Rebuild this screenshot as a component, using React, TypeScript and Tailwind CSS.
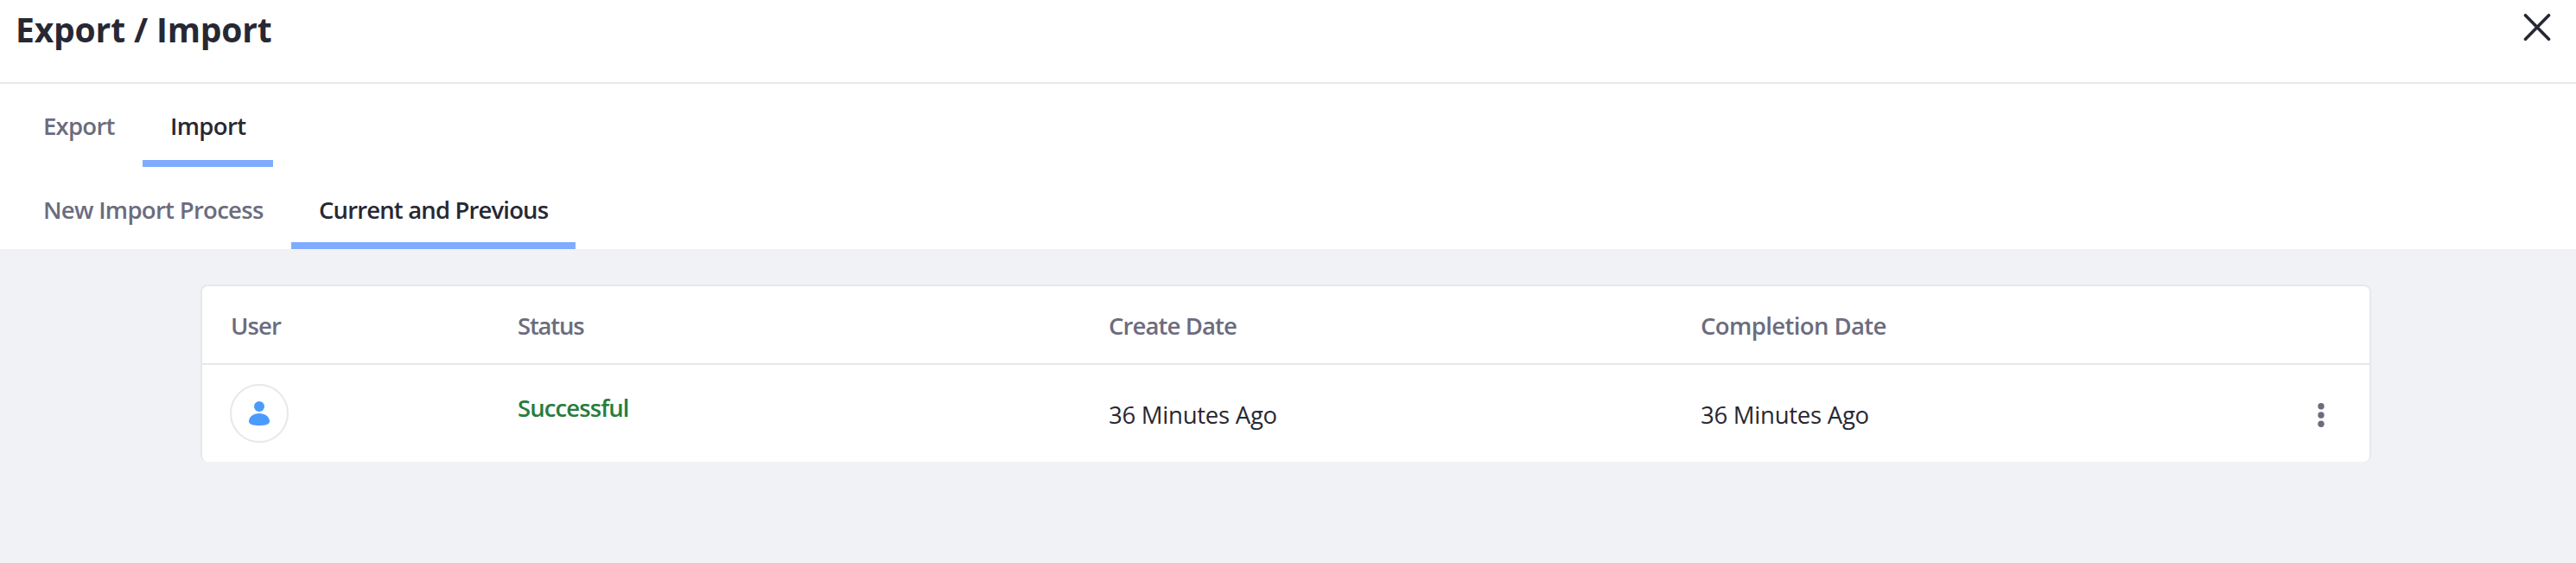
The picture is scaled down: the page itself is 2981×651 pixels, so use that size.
import type { ReactNode } from "react";

function Tab({ active, className, children }: { active?: boolean; className: string; children: ReactNode }) {
  return (
    <button
      className={`h-full shrink-0 border-b-8 text-left ${active ? "border-[#80acff] text-[#272833]" : "border-transparent text-[#6b6c7e]"} ${className}`}
    >
      {children}
    </button>
  );
}

export default function App() {
  return (
    <div className="flex h-[651px] w-full flex-col overflow-hidden whitespace-nowrap bg-[#f1f2f5] font-['Open_Sans','Noto_Sans',sans-serif] text-[27.5px] leading-[40px] text-[#272833]">
      <header className="flex h-[97px] shrink-0 items-start justify-between border-b-2 border-[#e7e7ed] bg-white pl-[18px] pr-[29px]">
        <h1 className="pt-1 text-[39px] font-bold leading-[60px] tracking-[-0.15px]"><span>Export / Import</span></h1>
        <button aria-label="Close" className="pt-[15px]">
          <svg width="32" height="33" viewBox="0 0 32 33" fill="none" stroke="#272833" strokeWidth="3.6" strokeLinecap="round">
            <path d="M2.5 2.7 29.5 30.3M29.5 2.7 2.5 30.3" />
          </svg>
        </button>
      </header>
      <nav className="flex h-24 shrink-0 bg-white pl-[17px] font-semibold">
        <Tab className="w-[148px] pl-[33px] pt-[9px] tracking-[-0.75px]"><span>Export</span></Tab>
        <Tab active className="w-[151px] pl-8 pt-[9px] tracking-[-0.65px]"><span>Import</span></Tab>
      </nav>
      <nav className="flex h-[95px] shrink-0 bg-white pl-[17px] font-semibold">
        <Tab className="w-[320px] pl-[33px] pt-3 tracking-[-0.7px]"><span>New Import Process</span></Tab>
        <Tab active className="w-[329px] pl-8 pt-3 tracking-[-0.85px]"><span>Current and Previous</span></Tab>
      </nav>
      <main className="pl-[232px] pt-[41px]">
        <div className="w-[2512px] overflow-hidden rounded-lg border-2 border-b-0 border-[#e7e7ed] bg-white">
          <div className="grid h-[91px] grid-cols-[341px_685px_685px_1fr] items-center border-b-2 border-[#e7e7ed] pt-0.5 font-semibold text-[#6b6c7e]">
            <div className="pl-[33px] tracking-[-0.9px]"><span>User</span></div>
            <div className="pl-6 tracking-[-1.2px]"><span>Status</span></div>
            <div className="pl-[23px] tracking-[-0.9px]"><span>Create Date</span></div>
            <div className="pl-[23px] tracking-[-0.6px]"><span>Completion Date</span></div>
          </div>
          <div className="grid h-[112px] grid-cols-[341px_685px_685px_684px_1fr] items-center">
            <div className="pl-8">
              <span className="flex size-[68px] items-center justify-center rounded-full border-2 border-[#e7e7ed]">
                <svg width="24" height="28" viewBox="0 0 24 28" fill="#4b9bff">
                  <circle cx="12" cy="6" r="6" />
                  <path d="M12 14C5 14 0 18.2 0 23.2 0 26.8 5 28 12 28S24 26.8 24 23.2C24 18.2 19 14 12 14Z" />
                </svg>
              </span>
            </div>
            <div className="pb-3 pl-6 font-semibold tracking-[-0.9px] text-[#287d3c]"><span>Successful</span></div>
            <div className="pl-[23px] pt-1 tracking-[-0.25px]"><span>36 Minutes Ago</span></div>
            <div className="pl-[23px] pt-1 tracking-[-0.25px]"><span>36 Minutes Ago</span></div>
            <button aria-label="Actions" className="pl-[53px] pt-1">
              <svg width="8" height="28" viewBox="0 0 8 28" fill="#6b6c7e">
                <circle cx="4" cy="3.8" r="3.7" />
                <circle cx="4" cy="14" r="3.7" />
                <circle cx="4" cy="24.2" r="3.7" />
              </svg>
            </button>
          </div>
        </div>
      </main>
    </div>
  );
}
